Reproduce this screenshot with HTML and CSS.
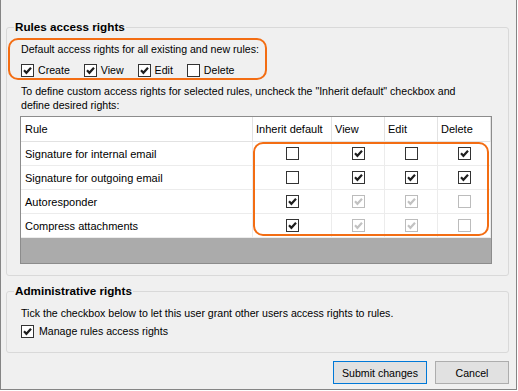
FILE: index.html
```html
<!DOCTYPE html>
<html>
<head>
<meta charset="utf-8">
<title>Rules access rights</title>
<link rel="stylesheet" href="styles.css">
</head>
<body>
<div class="window">
  <fieldset class="group group-rules">
    <legend>Rules access rights</legend>
    <div class="defaults">
      <div class="line">Default access rights for all existing and new rules:</div>
      <div class="check-row">
        <label class="check"><span class="cb"><svg viewBox="0 0 11 11"><path d="M2 5.3 L4.4 7.8 L9 2.8"/></svg></span>Create</label>
        <label class="check"><span class="cb"><svg viewBox="0 0 11 11"><path d="M2 5.3 L4.4 7.8 L9 2.8"/></svg></span>View</label>
        <label class="check"><span class="cb"><svg viewBox="0 0 11 11"><path d="M2 5.3 L4.4 7.8 L9 2.8"/></svg></span>Edit</label>
        <label class="check"><span class="cb"></span>Delete</label>
      </div>
    </div>
    <p class="hint">To define custom access rights for selected rules, uncheck the "Inherit default" checkbox and<br>define desired rights:</p>
    <div class="grid-wrap">
      <div class="grid">
        <div class="hd">Rule</div>
        <div class="hd col">Inherit default</div>
        <div class="hd col">View</div>
        <div class="hd col">Edit</div>
        <div class="hd col">Delete</div>

        <div>Signature for internal email</div>
        <div class="c"><span class="cb"></span></div>
        <div class="c"><span class="cb"><svg viewBox="0 0 11 11"><path d="M2 5.3 L4.4 7.8 L9 2.8"/></svg></span></div>
        <div class="c"><span class="cb"></span></div>
        <div class="c"><span class="cb"><svg viewBox="0 0 11 11"><path d="M2 5.3 L4.4 7.8 L9 2.8"/></svg></span></div>

        <div>Signature for outgoing email</div>
        <div class="c"><span class="cb"></span></div>
        <div class="c"><span class="cb"><svg viewBox="0 0 11 11"><path d="M2 5.3 L4.4 7.8 L9 2.8"/></svg></span></div>
        <div class="c"><span class="cb"><svg viewBox="0 0 11 11"><path d="M2 5.3 L4.4 7.8 L9 2.8"/></svg></span></div>
        <div class="c"><span class="cb"><svg viewBox="0 0 11 11"><path d="M2 5.3 L4.4 7.8 L9 2.8"/></svg></span></div>

        <div>Autoresponder</div>
        <div class="c"><span class="cb"><svg viewBox="0 0 11 11"><path d="M2 5.3 L4.4 7.8 L9 2.8"/></svg></span></div>
        <div class="c"><span class="cb off"><svg viewBox="0 0 11 11"><path d="M2 5.3 L4.4 7.8 L9 2.8"/></svg></span></div>
        <div class="c"><span class="cb off"><svg viewBox="0 0 11 11"><path d="M2 5.3 L4.4 7.8 L9 2.8"/></svg></span></div>
        <div class="c"><span class="cb off"></span></div>

        <div>Compress attachments</div>
        <div class="c"><span class="cb"><svg viewBox="0 0 11 11"><path d="M2 5.3 L4.4 7.8 L9 2.8"/></svg></span></div>
        <div class="c"><span class="cb off"><svg viewBox="0 0 11 11"><path d="M2 5.3 L4.4 7.8 L9 2.8"/></svg></span></div>
        <div class="c"><span class="cb off"><svg viewBox="0 0 11 11"><path d="M2 5.3 L4.4 7.8 L9 2.8"/></svg></span></div>
        <div class="c"><span class="cb off"></span></div>
      </div>
      <div class="grid-highlight"></div>
    </div>
  </fieldset>

  <fieldset class="group group-admin">
    <legend>Administrative rights</legend>
    <div class="line">Tick the checkbox below to let this user grant other users access rights to rules.</div>
    <div class="check-row">
      <label class="check"><span class="cb"><svg viewBox="0 0 11 11"><path d="M2 5.3 L4.4 7.8 L9 2.8"/></svg></span>Manage rules access rights</label>
    </div>
  </fieldset>

  <div class="buttons">
    <button class="btn btn-submit">Submit changes</button>
    <button class="btn btn-cancel">Cancel</button>
  </div>
</div>
</body>
</html>
```
FILE: styles.css
```css
* { box-sizing: border-box; }

html, body {
  margin: 0;
  padding: 0;
  background: #ffffff;
}

body {
  font-family: "Liberation Sans", Arial, sans-serif;
  font-size: 10.6px;
  color: #000;
}

.window {
  width: 517px;
  height: 390px;
  background: #f0f0f0;
  border: 1px solid #858585;
  border-top: 0;
  padding: 20px 7px 5px 5px;
  display: flex;
  flex-direction: column;
}

.group {
  margin: 0;
  padding: 4px 7px 11px 14px;
  border: 1px solid #d9d9d9;
  border-radius: 3px;
  min-width: 0;
}

.group legend {
  padding: 0 1px;
  margin-left: -7px;
  font-size: 11.7px;
  font-weight: bold;
  line-height: 14px;
}

.group-admin {
  margin-top: 8px;
  padding: 8px 7px 14px 14px;
}

.line {
  line-height: 14px;
  white-space: nowrap;
}

.defaults {
  width: 259px;
  margin-left: -13px;
  border: 2px solid #f36d13;
  border-radius: 10px;
  padding: 2px 0 1px 11px;
}

.check-row {
  display: flex;
  gap: 14px;
  margin-top: 7px;
  height: 14px;
  align-items: center;
}

.group-admin .check-row {
  margin-top: 4px;
}

.check {
  display: inline-flex;
  align-items: center;
  gap: 4px;
  line-height: 14px;
  white-space: nowrap;
}

.group-admin .check {
  gap: 5px;
}

.cb {
  width: 13px;
  height: 13px;
  flex: none;
  border: 1px solid #333333;
  background: #ffffff;
  display: inline-block;
}

.cb svg {
  display: block;
  width: 11px;
  height: 11px;
}

.cb path {
  fill: none;
  stroke: #1e1e1e;
  stroke-width: 2.2;
  stroke-linecap: butt;
  stroke-linejoin: miter;
}

.cb.off {
  border-color: #bcbcbc;
}

.cb.off path {
  stroke: #c2c2c2;
}

.hint {
  margin: 4px 0 0;
  line-height: 14px;
  white-space: nowrap;
}

.grid-wrap {
  position: relative;
  margin: 4px 0 0 -1px;
  width: 472px;
  height: 148px;
  border: 1px solid #8c8c8c;
  background: #ababab;
}

.grid {
  display: grid;
  grid-template-columns: 232px 79px 53px 53px 53px;
  grid-template-rows: 25px repeat(4, 24px);
  background: #ffffff;
  font-size: 11px;
}

.grid > div {
  display: flex;
  align-items: center;
  padding-left: 4px;
  border-right: 1px solid #ececec;
  border-bottom: 1px solid #ececec;
  white-space: nowrap;
}

.grid > .hd {
  border-color: #e2e2e2;
}

.grid > .col {
  padding-left: 3px;
}

.grid > .c {
  justify-content: center;
  padding-left: 0;
}

.grid-highlight {
  position: absolute;
  left: 232px;
  top: 25px;
  width: 236px;
  height: 94px;
  border: 2px solid #f36d13;
  border-radius: 10px;
}

.buttons {
  display: flex;
  justify-content: flex-end;
  gap: 8px;
  margin-top: 8px;
}

.btn {
  height: 23px;
  padding: 0;
  font-family: "Liberation Sans", Arial, sans-serif;
  font-size: 10.6px;
  color: #000;
  background: #e1e1e1;
  border: 1px solid #adadad;
  border-radius: 0;
}

.btn-submit {
  width: 94px;
  border-color: #0078d7;
}

.btn-cancel {
  width: 74px;
}
```
